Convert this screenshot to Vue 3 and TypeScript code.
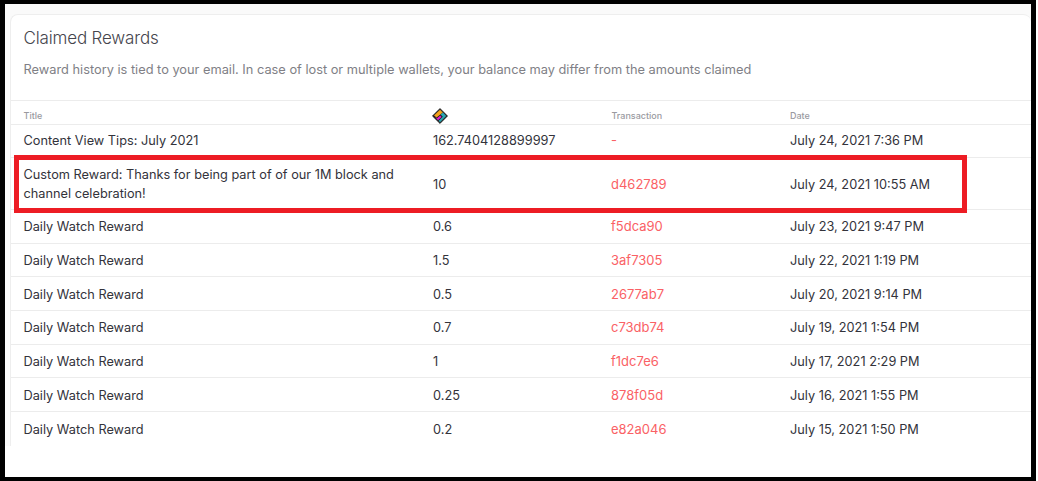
<script setup lang="ts">
interface Row { title: string; amount: string; tx: string; date: string; tall?: boolean; first?: boolean }
const rows: Row[] = [
  { title: 'Content View Tips: July 2021', amount: '162.7404128899997', tx: '-', date: 'July 24, 2021 7:36 PM', first: true },
  { title: 'Custom Reward: Thanks for being part of of our 1M block and channel celebration!', amount: '10', tx: 'd462789', date: 'July 24, 2021 10:55 AM', tall: true },
  { title: 'Daily Watch Reward', amount: '0.6', tx: 'f5dca90', date: 'July 23, 2021 9:47 PM' },
  { title: 'Daily Watch Reward', amount: '1.5', tx: '3af7305', date: 'July 22, 2021 1:19 PM' },
  { title: 'Daily Watch Reward', amount: '0.5', tx: '2677ab7', date: 'July 20, 2021 9:14 PM' },
  { title: 'Daily Watch Reward', amount: '0.7', tx: 'c73db74', date: 'July 19, 2021 1:54 PM' },
  { title: 'Daily Watch Reward', amount: '1', tx: 'f1dc7e6', date: 'July 17, 2021 2:29 PM' },
  { title: 'Daily Watch Reward', amount: '0.25', tx: '878f05d', date: 'July 16, 2021 1:55 PM' },
  { title: 'Daily Watch Reward', amount: '0.2', tx: 'e82a046', date: 'July 15, 2021 1:50 PM' },
]
</script>

<template>
  <div class="shot">
    <div class="frame">
      <div class="page">
        <section class="card">
          <header class="head">
            <h2>Claimed Rewards</h2>
            <p>Reward history is tied to your email. In case of lost or multiple wallets, your balance may differ from the amounts claimed</p>
          </header>
          <div class="row th">
            <span>Title</span>
            <span class="ic">
              <svg width="16" height="16" viewBox="0 0 16 16">
                <path d="M8 .4 15.6 8 8 15.6.4 8Z" fill="#1c1c1c" stroke="#1c1c1c" stroke-width=".6" stroke-linejoin="round" />
                <path d="M8 1.8 10.8 4.4 4.6 9.4 2 7.6Z" fill="#f5a31a" />
                <path d="M11 4.6 14.2 8 8 14.2 6.6 12.8 10.8 8.8 8.6 6.6Z" fill="#2ba7b4" />
                <path d="M2.8 8.6 5 10.2 8.2 7.6 9.6 8.9 6 12.2Z" fill="#e61ecb" />
              </svg>
            </span>
            <span>Transaction</span>
            <span>Date</span>
          </div>
          <div v-for="r in rows" :key="r.tx + r.date" class="row" :class="{ tall: r.tall, first: r.first }">
            <span class="title">{{ r.title }}</span>
            <span>{{ r.amount }}</span>
            <span class="link">{{ r.tx }}</span>
            <span>{{ r.date }}</span>
          </div>
        </section>
        <div class="hl"></div>
      </div>
    </div>
  </div>
</template>

<style>
html, body { margin: 0; background: #fff; }
</style>

<style scoped>
.shot {
  width: 1038px;
  height: 481px;
  overflow: hidden;
  background: #fff;
}
.frame {
  box-sizing: border-box;
  width: 1036px;
  height: 481px;
  border: solid #000;
  border-width: 4px 5px;
  background: #fff;
}
.page {
  position: relative;
  height: 442px;
  padding: 10px 0 0 5px;
  box-sizing: border-box;
  background: #fafafa;
  font-family: Inter, "Liberation Sans", sans-serif;
  color: #33333b;
}
.card {
  box-sizing: border-box;
  width: 1021px;
  height: 432px;
  border: 1px solid #eee;
  border-width: 1px 0 0 1px;
  border-radius: 8px 8px 0 0;
  background: #fff;
}
.head {
  height: 86px;
  box-sizing: border-box;
  padding: 11px 13px 0 12.5px;
  border-bottom: 1px solid #ececec;
}
h2 {
  margin: 0;
  font-size: 17px;
  line-height: 24px;
  font-weight: 300;
  letter-spacing: -0.16px;
  color: #45454d;
}
p {
  margin: 10px 0 0;
  font-size: 12.8px;
  line-height: 20px;
  font-weight: 400;
  color: #7f7f86;
}
.row {
  display: grid;
  grid-template-columns: 409.5px 178.5px 178.5px 1fr;
  align-items: center;
  box-sizing: border-box;
  height: 33.67px;
  padding: 1px 0 0 12.5px;
  border-bottom: 1px solid #ececec;
  font-size: 12.75px;
  line-height: 19px;
}
.row:last-child { border-bottom: 0; }
.row.first { height: 33px; padding: 0 0 1px 12.5px; }
.row.tall { height: 52px; padding-top: 1px; }
.row.th {
  height: 24px;
  padding-top: 5px;
  font-size: 9px;
  font-weight: 500;
  color: #9a9a9f;
}
.title { padding-right: 30px; }
.ic { display: flex; margin-left: -1px; }
.link { color: #fa6165; font-size: 13px; margin-left: -0.5px; }
.hl {
  position: absolute;
  left: 9px;
  top: 151px;
  width: 953px;
  height: 58px;
  box-sizing: border-box;
  border: 5px solid #ed1c24;
}
</style>
